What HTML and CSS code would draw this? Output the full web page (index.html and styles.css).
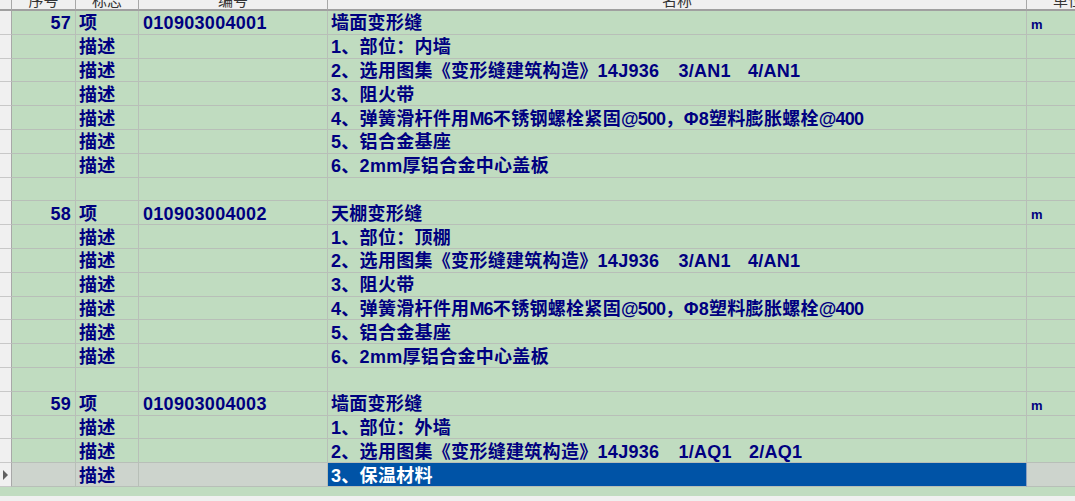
FILE: index.html
```html
<!DOCTYPE html>
<html lang="zh-CN">
<head>
<meta charset="utf-8">
<title>清单</title>
<link rel="stylesheet" href="styles.css">
</head>
<body>
<div class="grid">
  <div class="row head">
    <div class="c g"></div>
    <div class="c n"><span class="ht">序号</span></div>
    <div class="c f"><span class="ht">标志</span></div>
    <div class="c code"><span class="ht">编号</span></div>
    <div class="c name"><span class="ht">名称</span></div>
    <div class="c unit"><span class="ht">单位</span></div>
  </div>

  <div class="row"><div class="c g"></div><div class="c n">57</div><div class="c f">项</div><div class="c code">010903004001</div><div class="c name">墙面变形缝</div><div class="c unit"><span class="u">m</span></div></div>
  <div class="row"><div class="c g"></div><div class="c n"></div><div class="c f">描述</div><div class="c code"></div><div class="c name">1、部位：内墙</div><div class="c unit"></div></div>
  <div class="row"><div class="c g"></div><div class="c n"></div><div class="c f">描述</div><div class="c code"></div><div class="c name">2、选用图集《变形缝建筑构造》14J936<span class="sp"></span>3/AN1<span class="sp2"></span>4/AN1</div><div class="c unit"></div></div>
  <div class="row"><div class="c g"></div><div class="c n"></div><div class="c f">描述</div><div class="c code"></div><div class="c name">3、阻火带</div><div class="c unit"></div></div>
  <div class="row"><div class="c g"></div><div class="c n"></div><div class="c f">描述</div><div class="c code"></div><div class="c name">4、弹簧滑杆件用<span class="tight">M6</span>不锈钢螺栓紧固<span class="tight">@500</span>，Φ8塑料膨胀螺栓<span class="tight">@400</span></div><div class="c unit"></div></div>
  <div class="row"><div class="c g"></div><div class="c n"></div><div class="c f">描述</div><div class="c code"></div><div class="c name">5、铝合金基座</div><div class="c unit"></div></div>
  <div class="row"><div class="c g"></div><div class="c n"></div><div class="c f">描述</div><div class="c code"></div><div class="c name">6、2mm厚铝合金中心盖板</div><div class="c unit"></div></div>
  <div class="row"><div class="c g"></div><div class="c n"></div><div class="c f"></div><div class="c code"></div><div class="c name"></div><div class="c unit"></div></div>

  <div class="row"><div class="c g"></div><div class="c n">58</div><div class="c f">项</div><div class="c code">010903004002</div><div class="c name">天棚变形缝</div><div class="c unit"><span class="u">m</span></div></div>
  <div class="row"><div class="c g"></div><div class="c n"></div><div class="c f">描述</div><div class="c code"></div><div class="c name">1、部位：顶棚</div><div class="c unit"></div></div>
  <div class="row"><div class="c g"></div><div class="c n"></div><div class="c f">描述</div><div class="c code"></div><div class="c name">2、选用图集《变形缝建筑构造》14J936<span class="sp"></span>3/AN1<span class="sp2"></span>4/AN1</div><div class="c unit"></div></div>
  <div class="row"><div class="c g"></div><div class="c n"></div><div class="c f">描述</div><div class="c code"></div><div class="c name">3、阻火带</div><div class="c unit"></div></div>
  <div class="row"><div class="c g"></div><div class="c n"></div><div class="c f">描述</div><div class="c code"></div><div class="c name">4、弹簧滑杆件用<span class="tight">M6</span>不锈钢螺栓紧固<span class="tight">@500</span>，Φ8塑料膨胀螺栓<span class="tight">@400</span></div><div class="c unit"></div></div>
  <div class="row"><div class="c g"></div><div class="c n"></div><div class="c f">描述</div><div class="c code"></div><div class="c name">5、铝合金基座</div><div class="c unit"></div></div>
  <div class="row"><div class="c g"></div><div class="c n"></div><div class="c f">描述</div><div class="c code"></div><div class="c name">6、2mm厚铝合金中心盖板</div><div class="c unit"></div></div>
  <div class="row"><div class="c g"></div><div class="c n"></div><div class="c f"></div><div class="c code"></div><div class="c name"></div><div class="c unit"></div></div>

  <div class="row"><div class="c g"></div><div class="c n">59</div><div class="c f">项</div><div class="c code">010903004003</div><div class="c name">墙面变形缝</div><div class="c unit"><span class="u">m</span></div></div>
  <div class="row"><div class="c g"></div><div class="c n"></div><div class="c f">描述</div><div class="c code"></div><div class="c name">1、部位：外墙</div><div class="c unit"></div></div>
  <div class="row"><div class="c g"></div><div class="c n"></div><div class="c f">描述</div><div class="c code"></div><div class="c name">2、选用图集《变形缝建筑构造》14J936<span class="sp"></span>1/AQ1<span class="sp2"></span>2/AQ1</div><div class="c unit"></div></div>
  <div class="row cur"><div class="c g"><span class="ptr"></span></div><div class="c n"></div><div class="c f">描述</div><div class="c code"></div><div class="c name sel">3、保温材料</div><div class="c unit"></div></div>
</div>
<div class="tail"></div>
<div class="foot"></div>
</body>
</html>
```

FILE: styles.css
```css
html, body {
  margin: 0;
  padding: 0;
  width: 1075px;
  height: 501px;
  overflow: hidden;
  background: #f0f0f0;
}

.grid {
  width: 1110px;
  font-family: "Liberation Sans", "Noto Sans CJK SC", sans-serif;
  font-weight: 700;
  font-size: 18px;
  letter-spacing: 0.3px;
  color: #000080;
}

.row {
  display: grid;
  grid-template-columns: 12px 64px 63px 189px 699px 83px;
  height: 23.8px;
  background: #c0dcc0;
}

.c {
  box-sizing: border-box;
  border-right: 1px solid #b8bfb8;
  border-bottom: 1px solid #b8bfb8;
  display: flex;
  align-items: center;
  white-space: pre;
  overflow: hidden;
  line-height: 22px;
  padding-left: 3px;
  padding-top: 2px;
}

.c.g {
  background: #f0f0f0;
  border-right: 1px solid #a8a8a8;
  border-bottom: 1px solid #c8c8c8;
  padding: 0;
}

.c.n {
  justify-content: flex-end;
  padding-left: 0;
  padding-right: 4px;
}

.c.code {
  padding-left: 4px;
}

.c.unit {
  border-right: none;
  padding-left: 4px;
}

.u {
  font-size: 13px;
  line-height: 13px;
  margin-top: 2px;
}

.tight { letter-spacing: -0.8px; }

.sp { display: inline-block; width: 19px; }
.sp2 { display: inline-block; width: 17px; }

/* header */
.row.head {
  height: 11px;
  background: #f0f0f0;
}
.row.head .c {
  border-bottom: 2px solid #a0a0a0;
  border-right: 1px solid #a8a8a8;
  justify-content: center;
  align-items: flex-end;
  padding: 0;
  background: #f0f0f0;
}
.row.head .c.g { border-bottom: 2px solid #a0a0a0; }
.row.head .c.unit { justify-content: flex-start; padding-left: 26px; }
.ht {
  font-family: "Noto Sans CJK SC", sans-serif;
  font-weight: 400;
  font-size: 15px;
  letter-spacing: 0;
  color: #333333;
  line-height: 16px;
  margin-bottom: 1px;
}

/* current row */
.row.cur .c { background: #cdd4cd; }
.row.cur .c.g { background: #f0f0f0; }
.row.cur .c.name.sel {
  background: #0053a6;
  color: #ffffff;
  border-right: 1px solid #8aa0c0;
}

.ptr {
  width: 0;
  height: 0;
  border-top: 5px solid transparent;
  border-bottom: 5px solid transparent;
  border-left: 5px solid #606060;
  margin-left: 3px;
}

.tail {
  height: 9px;
  background: #c0dcc0;
}

.foot {
  height: 10px;
  background: #f0f0f0;
}
```
